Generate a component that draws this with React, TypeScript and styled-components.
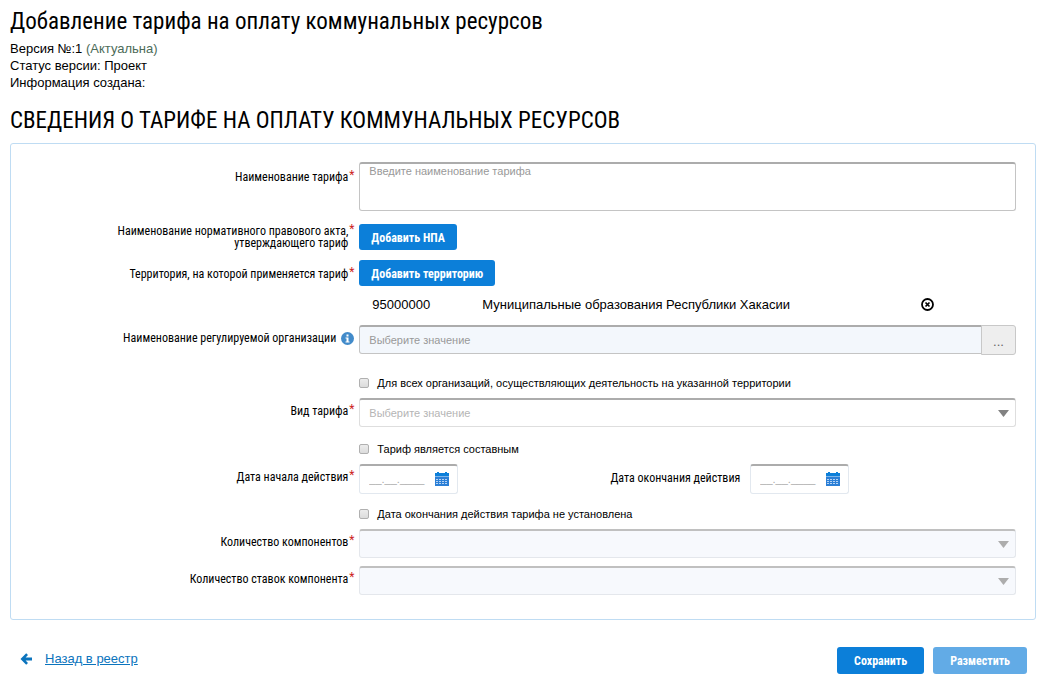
import React from "react";
import styled, { createGlobalStyle } from "styled-components";

const narrow = `"Roboto Condensed", "Liberation Sans Narrow", Roboto, sans-serif`;
const sans = `Arial, "Liberation Sans", sans-serif`;

const GlobalStyle = createGlobalStyle`
  *, *::before, *::after { box-sizing: border-box; }
  body {
    margin: 0;
    background: #fff;
    color: #000;
    font-family: ${sans};
    font-size: 13px;
    line-height: 17px;
  }
`;

const Page = styled.main`
  padding: 9px 9px 16px 10px;
`;

const Title = styled.h1`
  margin: 0 0 5px;
  font: 400 23px/26px ${narrow};
`;

const Meta = styled.p`
  margin: 0;
`;

const Status = styled.span`
  color: #4c6b58;
`;

const SectionTitle = styled.h2`
  margin: 17px 0 9px;
  font: 400 23px/26px ${narrow};
  text-transform: uppercase;
`;

const Panel = styled.section`
  padding: 18px 19px 24px 20px;
  border: 1px solid #bfdcf3;
  border-radius: 3px;
`;

const Row = styled.div<{ $top?: number }>`
  display: grid;
  grid-template-columns: minmax(0, 1fr) minmax(0, 2fr);
  margin-top: ${(p) => p.$top ?? 0}px;
`;

const LabelCell = styled.div<{ $top?: number }>`
  display: flex;
  justify-content: flex-end;
  align-items: flex-start;
  padding: ${(p) => p.$top ?? 7}px 5px 0 0;
  font: 400 12px/12px ${narrow};
  text-align: right;
`;

const Star = styled.span`
  width: 6px;
  color: #c22;
  line-height: 9px;
`;

const InfoIcon = styled.svg`
  margin-left: 5px;
`;

const FieldLabel = styled.label``;

const fieldBorder = `
  border: 1px solid #c4c4c4;
  border-top: 2px solid #acacac;
  border-radius: 3px;
`;

const TextArea = styled.textarea`
  display: block;
  width: 100%;
  height: 49px;
  padding: 0 9px;
  ${fieldBorder}
  resize: none;
  font: 11px/15px ${sans};
  &::placeholder { color: #999; opacity: 1; }
`;

const Button = styled.button<{ $wide?: boolean }>`
  height: ${(p) => (p.$wide ? 27 : 26)}px;
  padding: 1px ${(p) => (p.$wide ? 17 : 12)}px 0;
  border: 0;
  border-radius: 3px;
  background: #0c7fd9;
  color: #fff;
  font: 700 12px/24px ${narrow};
  &:disabled { background: #62abe6; }
`;

const Results = styled.table`
  width: 100%;
  border-collapse: collapse;
  table-layout: fixed;
  td {
    height: 36px;
    padding: 0;
    vertical-align: middle;
  }
  td:first-child { width: 123px; padding-left: 13px; }
  td:last-child { width: 95px; }
`;

const IconButton = styled.button`
  display: block;
  padding: 0;
  border: 0;
  background: none;
  line-height: 0;
`;

const InputGroup = styled.div`
  display: flex;
  align-items: flex-start;
`;

const TextInput = styled.input`
  flex: 1;
  min-width: 0;
  height: 29px;
  padding: 0 9px;
  ${fieldBorder}
  border-radius: 3px 0 0 3px;
  background: #f3f7fc;
  font: 11px/15px ${sans};
  &::placeholder { color: #999; opacity: 1; }
`;

const MoreButton = styled.button`
  width: 35px;
  height: 30px;
  margin-left: -1px;
  padding: 2px 0 0;
  border: 1px solid #c8c8c8;
  border-radius: 0 3px 3px 0;
  background: #eee;
  color: #666;
  font: 13px/17px ${sans};
`;

const CheckLabel = styled.label<{ $top: number }>`
  display: flex;
  align-items: center;
  gap: 8px;
  height: 20px;
  margin: ${(p) => p.$top}px 0 5px;
  font: 11px/15px ${sans};
`;

const CheckBox = styled.input`
  appearance: none;
  width: 10px;
  height: 10px;
  margin: 0;
  border: 1px solid #b0b0b0;
  border-radius: 2px;
  background: linear-gradient(#ececec, #dcdcdc);
`;

const SelectBox = styled.div`
  display: grid;
  grid-template-columns: 1fr 18px;
  align-items: center;
`;

const Select = styled.select`
  grid-area: 1 / 1 / 2 / 3;
  appearance: none;
  width: 100%;
  height: 29px;
  padding: 0 9px;
  border: 1px solid #dedede;
  border-top: 2px solid #acacac;
  border-radius: 3px;
  background: #fff;
  color: #b5b5b5;
  font: 11px/15px ${sans};
  opacity: 1;
  &:disabled { background: #f7f9fd; border-color: #c0c0c0 #e4e7ec #e4e7ec; }
`;

const Arrow = styled.svg`
  grid-area: 1 / 2;
  pointer-events: none;
`;

const Dates = styled.div`
  display: flex;
  align-items: flex-start;
`;

const DateBox = styled.div`
  display: flex;
  align-items: center;
  width: 99px;
  height: 30px;
  padding: 0 8px 0 9px;
  border: 1px solid #e2e8ef;
  border-top: 2px solid #acacac;
  border-radius: 3px;
`;

const DateInput = styled.input`
  flex: 1;
  min-width: 0;
  padding: 0;
  border: 0;
  font: 11px/15px ${sans};
  &::placeholder { color: #aaa; opacity: 1; }
`;

const EndLabel = styled.label`
  width: 134px;
  margin: 8px 10px 0 148px;
  font: 400 12px/12px ${narrow};
  text-align: right;
`;

const Footer = styled.footer`
  display: flex;
  align-items: center;
  gap: 9px;
  padding: 27px 9px 0 10px;
`;

const BackLink = styled.a`
  display: flex;
  align-items: center;
  gap: 12px;
  margin: 0 auto 4px 0;
  color: #0b74bd;
  text-decoration: none;
  span { text-decoration: underline; }
`;

const CalendarIcon = () => (
  <svg width="14" height="15" viewBox="0 0 14 15" aria-hidden="true">
    <path d="M0 1h2V0h2v1h6V0h2v1h2v3H0z" fill="#0c7fd9" />
    <path d="M0 4h14v1H0z" fill="#7db5ea" />
    <path d="M0 5h14v9H0z" fill="#2b7fd6" />
    <path d="M1 7h2v1H1zM4 7h2v1H4zM7 7h2v1H7zM10 7h2v1h-2zM1 9h2v1H1zM4 9h2v1H4zM7 9h2v1H7zM10 9h2v1h-2zM1 11h2v1H1zM4 11h2v1H4zM7 11h2v1H7zM10 11h2v1h-2z" fill="#b5d2f3" />
  </svg>
);

const Label = ({ id, text, required, top }: { id: string; text: React.ReactNode; required?: boolean; top?: number }) => (
  <LabelCell $top={top}>
    <FieldLabel htmlFor={id}>{text}</FieldLabel>
    {required && <Star>*</Star>}
  </LabelCell>
);

const Check = ({ id, text, top }: { id: string; text: string; top: number }) => (
  <Row>
    <span />
    <CheckLabel htmlFor={id} $top={top}>
      <CheckBox type="checkbox" id={id} />
      {text}
    </CheckLabel>
  </Row>
);

const DropDown = ({ id, placeholder = "", disabled }: { id: string; placeholder?: string; disabled?: boolean }) => (
  <SelectBox>
    <Select id={id} disabled={disabled}>
      <option>{placeholder}</option>
    </Select>
    <Arrow width="11" height="9" viewBox="0 0 11 9" aria-hidden="true">
      <path d="M0 2h11L5.500 9z" fill={disabled ? "#adadad" : "#828282"} />
    </Arrow>
  </SelectBox>
);

const DateField = ({ id }: { id: string }) => (
  <DateBox>
    <DateInput id={id} placeholder="__.__.____" />
    <IconButton type="button" aria-label="Календарь">
      <CalendarIcon />
    </IconButton>
  </DateBox>
);

export default function App() {
  return (
    <Page>
      <GlobalStyle />
      <Title>Добавление тарифа на оплату коммунальных ресурсов</Title>
      <Meta>Версия №:1 <Status>(Актуальна)</Status></Meta>
      <Meta>Статус версии: Проект</Meta>
      <Meta>Информация создана:</Meta>
      <SectionTitle>Сведения о тарифе на оплату коммунальных ресурсов</SectionTitle>
      <Panel>
        <Row>
          <Label id="name" text="Наименование тарифа" required top={9} />
          <TextArea id="name" placeholder="Введите наименование тарифа" />
        </Row>
        <Row $top={13}>
          <Label id="act" text={<>Наименование нормативного правового акта,<br />утверждающего тариф</>} required top={1} />
          <div><Button id="act" type="button">Добавить НПА</Button></div>
        </Row>
        <Row $top={10}>
          <Label id="area" text="Территория, на которой применяется тариф" required top={8} />
          <div>
            <Button id="area" type="button">Добавить территорию</Button>
          </div>
        </Row>
        <Row>
          <span />
          <Results>
            <tbody>
              <tr>
                <td>95000000</td>
                <td>Муниципальные образования Республики Хакасии</td>
                <td>
                  <IconButton type="button" aria-label="Удалить">
                    <svg width="13" height="13" viewBox="0 0 13 13" fill="none" stroke="#000" aria-hidden="true">
                      <circle cx="6.500" cy="6.500" r="5.500" strokeWidth="1.800" />
                      <path d="M4.500 4.500l4 4M8.500 4.500l-4 4" strokeWidth="1.700" />
                    </svg>
                  </IconButton>
                </td>
              </tr>
            </tbody>
          </Results>
        </Row>
        <Row $top={3}>
          <LabelCell>
            <FieldLabel htmlFor="org">Наименование регулируемой организации</FieldLabel>
            <InfoIcon width="13" height="13" viewBox="0 0 13 13" aria-hidden="true">
              <circle cx="6.500" cy="6.500" r="6.500" fill="#428bca" />
              <path d="M5.500 2.500h2v2h-2zM4.500 5.500h3v4h1v1h-4v-1h1v-3h-1z" fill="#fff" />
            </InfoIcon>
          </LabelCell>
          <InputGroup>
            <TextInput id="org" placeholder="Выберите значение" />
            <MoreButton type="button">...</MoreButton>
          </InputGroup>
        </Row>
        <Check id="all" top={18} text="Для всех организаций, осуществляющих деятельность на указанной территории" />
        <Row>
          <Label id="kind" text="Вид тарифа" required />
          <DropDown id="kind" placeholder="Выберите значение" />
        </Row>
        <Check id="compound" top={12} text="Тариф является составным" />
        <Row>
          <Label id="start" text="Дата начала действия" required />
          <Dates>
            <DateField id="start" />
            <EndLabel htmlFor="end">Дата окончания действия</EndLabel>
            <DateField id="end" />
          </Dates>
        </Row>
        <Check id="endless" top={10} text="Дата окончания действия тарифа не установлена" />
        <Row>
          <Label id="parts" text="Количество компонентов" required />
          <DropDown id="parts" disabled />
        </Row>
        <Row $top={8}>
          <Label id="rates" text="Количество ставок компонента" required />
          <DropDown id="rates" disabled />
        </Row>
      </Panel>
      <Footer>
        <BackLink href="#">
          <svg width="13" height="12" viewBox="0 0 13 12" aria-hidden="true">
            <path d="M.5 6L6.200.3L8 2.100L5.600 4.500H12V7.500H5.600L8 9.900L6.200 11.700z" fill="#0b74bd" />
          </svg>
          <span>Назад в реестр</span>
        </BackLink>
        <Button type="button" $wide>Сохранить</Button>
        <Button type="button" $wide disabled>Разместить</Button>
      </Footer>
    </Page>
  );
}
